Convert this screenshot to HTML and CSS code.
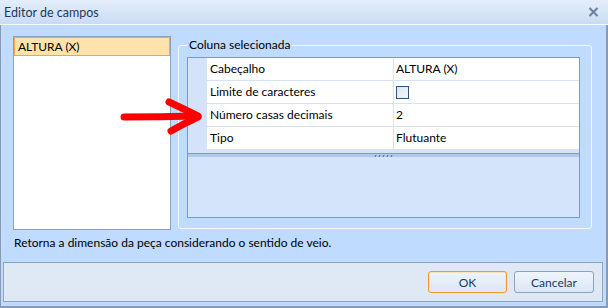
FILE: index.html
```html
<!DOCTYPE html>
<html>
<head>
<meta charset="utf-8">
<link rel="stylesheet" href="styles.css">
</head>
<body>
<div class="window">
  <div class="titlebar">
    <span class="title">Editor de campos</span>
    <svg class="close" width="11" height="10" viewBox="0 0 11 10"><path d="M1.5 1 L9.5 9 M9.5 1 L1.5 9" stroke="#6c7f9b" stroke-width="2" fill="none"/></svg>
  </div>
  <div class="client">
    <div class="main">
      <div class="list">
        <div class="item selected">ALTURA (X)</div>
      </div>
      <fieldset class="group">
        <legend>Coluna selecionada</legend>
        <div class="grid">
          <div class="rows">
            <div class="row"><div class="gut"></div><div class="name">Cabeçalho</div><div class="val">ALTURA (X)</div></div>
            <div class="row"><div class="gut"></div><div class="name">Limite de caracteres</div><div class="val"><span class="check"></span></div></div>
            <div class="row"><div class="gut"></div><div class="name">Número casas decimais</div><div class="val">2</div></div>
            <div class="row"><div class="gut"></div><div class="name">Tipo</div><div class="val">Flutuante</div></div>
          </div>
          <div class="splitter">
            <svg width="20" height="3" viewBox="0 0 20 3"><path d="M1 3 L2 1 M5 3 L6 1 M9 3 L10 1 M13 3 L14 1 M17 3 L18 1" stroke="#3d68b0" stroke-width="1" fill="none"/></svg>
          </div>
          <div class="desc"></div>
        </div>
      </fieldset>
    </div>
    <div class="status">Retorna a dimensão da peça considerando o sentido de veio.</div>
    <div class="buttons">
      <button class="btn ok">OK</button>
      <button class="btn">Cancelar</button>
    </div>
  </div>
  <svg class="arrow" width="608" height="308" viewBox="0 0 608 308">
    <g stroke="#ff0000" stroke-width="7" stroke-linecap="round" stroke-linejoin="round" fill="none">
      <path d="M124 117 Q160 117 196 116"/>
      <path d="M169 102 Q184 109 198 116"/>
      <path d="M171 131 Q185 123 198 117"/>
    </g>
  </svg>
</div>
</body>
</html>
```

FILE: styles.css
```css
html, body {
  margin: 0;
  padding: 0;
}
body {
  font-family: "Lato", "Liberation Sans", sans-serif;
  font-size: 12px;
  color: #000;
  background: #bfdbff;
}
.window {
  position: relative;
  width: 608px;
  height: 308px;
  display: flex;
  flex-direction: column;
  overflow: hidden;
}
.titlebar {
  height: 23px;
  border-bottom: 1px solid #ffffff;
  background: linear-gradient(#e4eefb, #c9dcf5);
  display: flex;
  align-items: center;
  justify-content: space-between;
  padding: 1px 9px 0 4px;
  box-sizing: content-box;
  flex: none;
}
.title {
  color: #1e395b;
  font-size: 12.5px;
  line-height: 14px;
}
.close {
  display: block;
  margin-top: -2px;
}
.client {
  flex: 1;
  background: #bfdbff;
  border-left: 1px solid #8b9ab0;
  border-right: 2px solid #8b9ab0;
  border-bottom: 2px solid #8b9ab0;
  display: flex;
  flex-direction: column;
}
.main {
  display: flex;
  align-items: flex-start;
  padding: 11px 0 0 12px;
}
.list {
  width: 158px;
  height: 194px;
  box-sizing: border-box;
  border: 1px solid #8ba2bf;
  background: #ffffff;
}
.item {
  height: 19px;
  line-height: 17px;
  box-sizing: border-box;
  padding-left: 3px;
}
.item.selected {
  background: #ffe3ab;
  border: 1px solid #f4a24c;
}
.group {
  margin: 2px 0 0 7px;
  width: 414px;
  height: 191px;
  box-sizing: border-box;
  border: 1px solid #f3f8ff;
  border-radius: 3px;
  padding: 5px 11px 10px 8px;
  min-width: 0;
}
.group legend {
  padding: 0 2px;
  line-height: 14px;
  color: #000;
}
.grid {
  height: 161px;
  box-sizing: border-box;
  border: 1px solid #7d9bc6;
  background: #d4e3f7;
  display: flex;
  flex-direction: column;
}
.rows {
  display: flex;
  flex-direction: column;
  flex: none;
}
.row {
  display: grid;
  grid-template-columns: 19px 187px 185px;
  height: 23px;
}
.name, .val {
  background: #ffffff;
  border-bottom: 1px solid #d5e3f5;
  line-height: 22px;
  white-space: nowrap;
}
.name {
  border-right: 1px solid #d5e3f5;
  padding-left: 3px;
}
.val {
  padding-left: 2px;
  display: flex;
  align-items: center;
}
.check {
  width: 13px;
  height: 13px;
  box-sizing: border-box;
  border: 1px solid #2f5283;
  background: linear-gradient(135deg, #dfe4ec, #f7f8fa);
  display: block;
}
.splitter {
  margin-top: 3px;
  height: 4px;
  box-sizing: border-box;
  border-top: 1px solid #7f9dcb;
  background: #b1c8e9;
  display: flex;
  justify-content: center;
  flex: none;
}
.splitter svg {
  display: block;
}
.desc {
  flex: 1;
  background: #d4e4fa;
}
.status {
  margin-top: 6px;
  padding-left: 13px;
  line-height: 14px;
  color: #000;
}
.buttons {
  margin: 12px 0 0 2px;
  width: 600px;
  height: 40px;
  box-sizing: border-box;
  border: 1px solid #8ea4c1;
  background: #dfe9f6;
  display: flex;
  justify-content: flex-end;
  gap: 7px;
  padding: 8px 8px 0 0;
}
.btn {
  width: 79px;
  height: 22px;
  box-sizing: border-box;
  border: 1px solid #8ca2c0;
  border-radius: 3px;
  background: linear-gradient(#eef4fc, #dce7f6);
  font-family: "Lato", "Liberation Sans", sans-serif;
  font-size: 12px;
  color: #1e395b;
  padding: 0;
  margin: 0;
}
.btn + .btn {
  width: 80px;
}
.btn.ok {
  border-color: #f2982c;
  box-shadow: inset 0 0 0 1px #fbe3c0;
}
.arrow {
  position: absolute;
  left: 0;
  top: 0;
  pointer-events: none;
}
```
